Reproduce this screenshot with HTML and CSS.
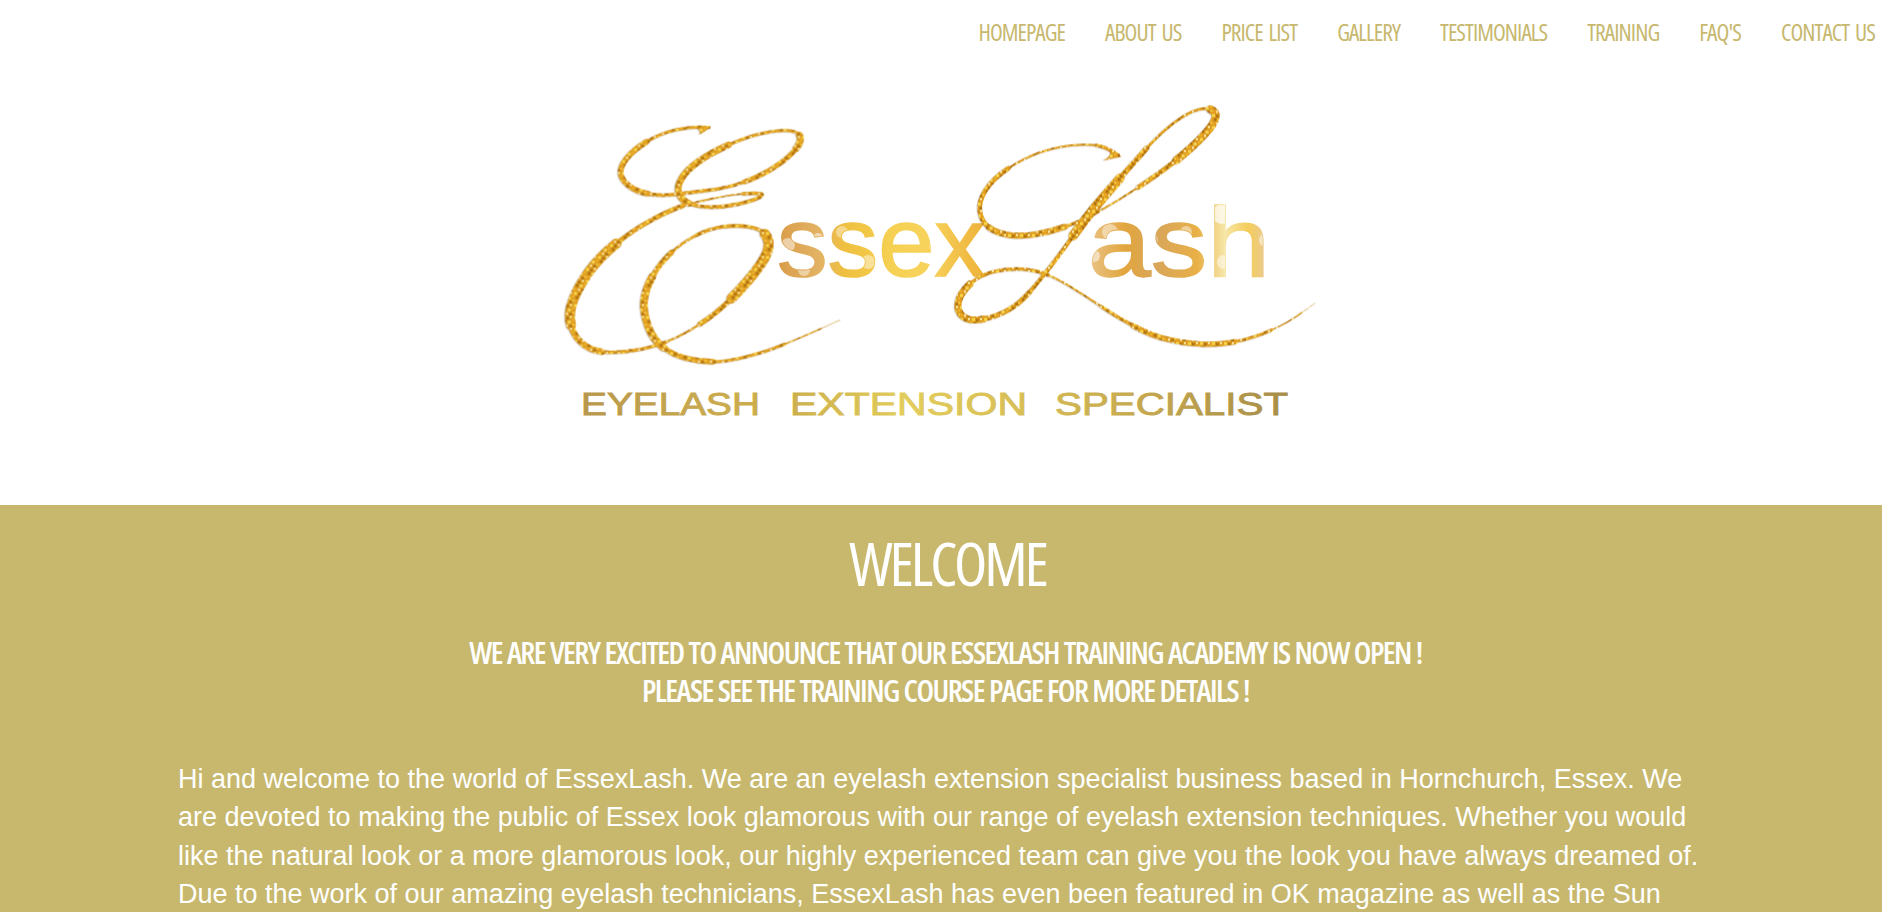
FILE: index.html
```html
<!DOCTYPE html>
<html lang="en">
<head>
<meta charset="utf-8">
<title>EssexLash</title>
<link rel="stylesheet" href="styles.css">
</head>
<body>
<header class="site-header">
  <nav class="main-nav">
    <a href="#">HOMEPAGE</a>
    <a href="#">ABOUT US</a>
    <a href="#">PRICE LIST</a>
    <a href="#">GALLERY</a>
    <a href="#">TESTIMONIALS</a>
    <a href="#">TRAINING</a>
    <a href="#">FAQ'S</a>
    <a href="#">CONTACT US</a>
  </nav>
  <div class="logo">
    <svg class="logo-art" width="802" height="350" viewBox="540 90 802 350" role="img" aria-label="EssexLash eyelash extension specialist">
      <defs>
        <pattern id="glitter" width="36" height="36" patternUnits="userSpaceOnUse">
          <rect width="36" height="36" fill="#dc9a1e"/>
          <rect x="0" y="0" width="9" height="9" fill="#f8d648"/>
          <rect x="12" y="3" width="8" height="7" fill="#a96c10"/>
          <rect x="24" y="0" width="6" height="6" fill="#fff2ac"/>
          <rect x="30" y="9" width="6" height="8" fill="#efb52c"/>
          <rect x="6" y="13" width="7" height="7" fill="#a2660e"/>
          <rect x="17" y="14" width="9" height="8" fill="#fbe060"/>
          <rect x="0" y="24" width="8" height="7" fill="#eeaa28"/>
          <rect x="12" y="26" width="6" height="6" fill="#fff6c4"/>
          <rect x="22" y="27" width="8" height="7" fill="#aa6e12"/>
          <rect x="31" y="23" width="5" height="6" fill="#f8d650"/>
        </pattern>
        <linearGradient id="ssex-fill" gradientUnits="userSpaceOnUse" x1="777" y1="0" x2="985" y2="0">
          <stop offset="0" stop-color="#d99c48"/>
          <stop offset=".2" stop-color="#e3b264"/>
          <stop offset=".32" stop-color="#efbf3f"/>
          <stop offset=".55" stop-color="#f5d052"/>
          <stop offset=".72" stop-color="#f7d35c"/>
          <stop offset="1" stop-color="#eeb23a"/>
        </linearGradient>
        <linearGradient id="ash-fill" gradientUnits="userSpaceOnUse" x1="1088" y1="0" x2="1270" y2="0">
          <stop offset="0" stop-color="#e9c48a"/>
          <stop offset=".2" stop-color="#e2a63e"/>
          <stop offset=".38" stop-color="#d9a65a"/>
          <stop offset=".6" stop-color="#e8b046"/>
          <stop offset=".75" stop-color="#f6e6a8"/>
          <stop offset=".88" stop-color="#f4cd5a"/>
          <stop offset="1" stop-color="#e8c9a0"/>
        </linearGradient>
        <linearGradient id="tag-fill" gradientUnits="userSpaceOnUse" x1="581" y1="0" x2="1288" y2="0">
          <stop offset="0" stop-color="#b8974b"/>
          <stop offset=".18" stop-color="#c9a94f"/>
          <stop offset=".3" stop-color="#cdb04d"/>
          <stop offset=".46" stop-color="#e2cd5c"/>
          <stop offset=".63" stop-color="#d6bd55"/>
          <stop offset=".8" stop-color="#c4a74e"/>
          <stop offset="1" stop-color="#a88d48"/>
        </linearGradient>
        <clipPath id="word-clip">
          <text class="logo-word" x="777" y="276" textLength="208" lengthAdjust="spacingAndGlyphs">ssex</text>
          <text class="logo-word" x="1088" y="276" textLength="182" lengthAdjust="spacingAndGlyphs">ash</text>
        </clipPath>
      </defs>

      <text class="logo-word" x="777" y="276" textLength="208" lengthAdjust="spacingAndGlyphs" fill="url(#ssex-fill)" stroke="url(#ssex-fill)" stroke-width="1.6">ssex</text>
      <text class="logo-word" x="1088" y="276" textLength="182" lengthAdjust="spacingAndGlyphs" fill="url(#ash-fill)" stroke="url(#ash-fill)" stroke-width="1.6">ash</text>
      <g clip-path="url(#word-clip)" fill="#fff">
        <circle cx="788" cy="245" r="7" opacity=".5"/>
        <circle cx="804" cy="270" r="6" opacity=".45"/>
        <circle cx="818" cy="238" r="5" opacity=".5"/>
        <circle cx="842" cy="232" r="6" opacity=".4"/>
        <circle cx="868" cy="262" r="7" opacity=".45"/>
        <circle cx="938" cy="246" r="9" opacity=".35"/>
        <circle cx="1110" cy="232" r="8" opacity=".45"/>
        <circle cx="1094" cy="256" r="6" opacity=".5"/>
        <circle cx="1150" cy="240" r="8" opacity=".4"/>
        <circle cx="1186" cy="232" r="6" opacity=".45"/>
        <circle cx="1222" cy="214" r="10" opacity=".7"/>
        <circle cx="1224" cy="262" r="7" opacity=".5"/>
        <circle cx="1266" cy="240" r="7" opacity=".5"/>
      </g>

      <g class="swash" transform="translate(550 100) scale(.3333)" fill="none" stroke="url(#glitter)" stroke-linecap="round">
        <path d="M482 80Q470 92 448 104Q454 92 440 84Z" fill="url(#glitter)" stroke="none"/>
        <path stroke-width="9" d="M478 82Q430 78 380 89Q330 100 290 125"/>
        <path stroke-width="17" d="M290 125Q250 150 230 175Q210 200 212 220Q215 240 237 257Q260 275 295 281"/>
        <path stroke-width="10" d="M295 281Q330 288 365 284Q400 280 465 272Q530 265 585 245"/>
        <path stroke-width="15" d="M585 245Q640 225 680 197Q720 170 739 145"/>
        <path stroke-width="21" d="M739 145Q758 120 749 106"/>
        <path stroke-width="9" d="M749 106Q740 92 710 91Q680 90 635 100Q590 110 535 135"/>
        <path stroke-width="20" d="M535 135Q480 160 445 185Q410 210 395 235Q380 260 387 280Q395 300 417 310"/>
        <path stroke-width="11" d="M417 310Q440 320 480 321Q520 322 560 313Q600 305 622 295Q645 285 632 281Q620 278 580 281"/>
        <path stroke-width="5" d="M580 281Q540 285 490 295Q440 305 400 317"/>
        <path stroke-width="14" d="M400 317Q360 330 305 360Q250 390 200 430"/>
        <path stroke-width="30" d="M200 430Q150 470 117 515Q85 560 70 600Q54 640 63 675"/>
        <path stroke-width="19" d="M63 675Q72 710 97 730Q120 750 155 755"/>
        <path stroke-width="10" d="M155 755Q190 760 245 752Q300 745 350 725"/>
        <path stroke-width="6" d="M350 725Q400 705 450 672"/>
        <path stroke-width="15" d="M450 672Q500 640 545 595"/>
        <path stroke-width="30" d="M545 595Q590 550 620 510Q650 470 655 445Q660 420 645 402"/>
        <path stroke-width="11" d="M645 402Q630 385 595 380Q560 375 520 380Q480 385 440 405"/>
        <path stroke-width="8" d="M440 405Q400 425 365 457"/>
        <path stroke-width="16" d="M365 457Q330 490 307 530"/>
        <path stroke-width="23" d="M307 530Q285 570 282 605Q280 640 295 680Q310 720 340 742"/>
        <path stroke-width="16" d="M340 742Q370 765 410 775Q450 785 490 785"/>
        <path stroke-width="9" d="M490 785Q530 785 590 770Q650 755 705 732"/>
        <path stroke-width="4" d="M705 732Q760 710 815 685"/>
        <path stroke-width="1.5" d="M815 685Q840 673 870 660"/>
      </g>

      <g class="swash" transform="translate(900 90) scale(.3333)" fill="none" stroke="url(#glitter)" stroke-linecap="round">
        <path d="M665 200L608 212Q640 198 628 176Z" fill="url(#glitter)" stroke="none"/>
        <path stroke-width="10" d="M655 195Q620 170 590 166"/>
        <path stroke-width="6" d="M590 166Q560 162 515 166Q470 170 420 187Q370 205 325 235"/>
        <path stroke-width="14" d="M325 235Q280 265 257 300Q235 335 240 365Q245 395 267 412"/>
        <path stroke-width="18" d="M267 412Q290 430 330 435Q370 440 410 432Q450 425 495 410"/>
        <path stroke-width="9" d="M495 410Q540 395 595 365"/>
        <path stroke-width="5" d="M595 365Q650 335 715 292"/>
        <path stroke-width="14" d="M715 292Q780 250 830 210"/>
        <path stroke-width="24" d="M830 210Q880 170 912 135Q945 100 947 82Q950 65 932 58"/>
        <path stroke-width="8" d="M932 58Q915 52 887 61Q860 70 820 100Q780 130 740 175"/>
        <path stroke-width="16" d="M740 175Q700 220 660 265"/>
        <path stroke-width="28" d="M660 265Q620 310 585 352Q550 395 520 437"/>
        <path stroke-width="12" d="M520 437Q490 480 455 525Q420 570 390 605"/>
        <path stroke-width="15" d="M390 605Q360 640 325 660Q290 680 250 687"/>
        <path stroke-width="21" d="M250 687Q210 695 190 680Q170 665 175 637Q180 610 210 582"/>
        <path stroke-width="10" d="M210 582Q240 555 280 545Q320 535 365 537Q410 540 445 555"/>
        <path stroke-width="6" d="M445 555Q480 570 520 595Q560 620 605 650"/>
        <path stroke-width="10" d="M605 650Q650 680 700 707"/>
        <path stroke-width="16" d="M700 707Q750 735 800 747Q850 760 900 762Q950 765 1005 755"/>
        <path stroke-width="9" d="M1005 755Q1060 745 1115 720"/>
        <path stroke-width="4" d="M1115 720Q1170 695 1207 667"/>
        <path stroke-width="1.5" d="M1207 667Q1225 655 1245 640"/>
      </g>

      <g class="logo-tag" fill="url(#tag-fill)" stroke="url(#tag-fill)" stroke-width=".9">
        <text x="581" y="415" textLength="179" lengthAdjust="spacingAndGlyphs">EYELASH</text>
        <text x="790" y="415" textLength="237" lengthAdjust="spacingAndGlyphs">EXTENSION</text>
        <text x="1055" y="415" textLength="233" lengthAdjust="spacingAndGlyphs">SPECIALIST</text>
      </g>
    </svg>
  </div>
</header>
<main class="welcome">
  <h1>WELCOME</h1>
  <h2>WE ARE VERY EXCITED TO ANNOUNCE THAT OUR ESSEXLASH TRAINING ACADEMY IS NOW OPEN !<br>PLEASE SEE THE TRAINING COURSE PAGE FOR MORE DETAILS !</h2>
  <p>Hi and welcome to the world of EssexLash. We are an eyelash extension specialist business based in Hornchurch, Essex. We are devoted to making the public of Essex look glamorous with our range of eyelash extension techniques. Whether you would like the natural look or a more glamorous look, our highly experienced team can give you the look you have always dreamed of. Due to the work of our amazing eyelash technicians, EssexLash has even been featured in OK magazine as well as the Sun</p>
</main>
</body>
</html>
```
FILE: styles.css
```css
html, body {
  height: 100%;
}
body {
  margin: 0;
  display: flex;
  flex-direction: column;
  overflow: hidden;
  background: #fff;
  color: #fff;
}
.main-nav {
  display: flex;
  justify-content: flex-end;
  gap: 40px;
  height: 63px;
  padding: 0 7px 2px 0;
  align-items: center;
  font-family: "Open Sans", "Liberation Sans", sans-serif;
  font-stretch: 75%;
  font-size: 23.5px;
  letter-spacing: -.95px;
  word-spacing: 2.5px;
}
.main-nav a {
  color: #c7b86e;
  text-decoration: none;
}
.logo {
  display: flex;
  justify-content: center;
  padding: 25px 0 65px;
}
.logo-art {
  display: block;
  flex: none;
}
.swash {
  filter: blur(.3px) drop-shadow(-1.5px 1px 1px rgba(110, 85, 50, .45));
}
.logo-word {
  font-family: "Liberation Sans", sans-serif;
  font-size: 98px;
}
.logo-tag {
  font-family: "Liberation Sans", sans-serif;
  font-size: 32px;
}
.welcome {
  flex: 1;
  background: #c7b86e;
  padding: 0 178px;
  text-align: center;
  font-family: "Open Sans", "Liberation Sans", sans-serif;
  font-stretch: 75%;
}
.welcome h1 {
  margin: 20px 0 0;
  padding-left: 13px;
  font-size: 61px;
  line-height: 76px;
  font-weight: 400;
  letter-spacing: -3.1px;
}
.welcome h2 {
  margin: 32px 0 0;
  padding-left: 9px;
  font-size: 31px;
  line-height: 38px;
  font-weight: 600;
  letter-spacing: -1.55px;
  word-spacing: .8px;
}
.welcome p {
  margin: 51px 0 0;
  font-family: "Liberation Sans", sans-serif;
  font-size: 27px;
  line-height: 38.4px;
  text-align: left;
}
```
